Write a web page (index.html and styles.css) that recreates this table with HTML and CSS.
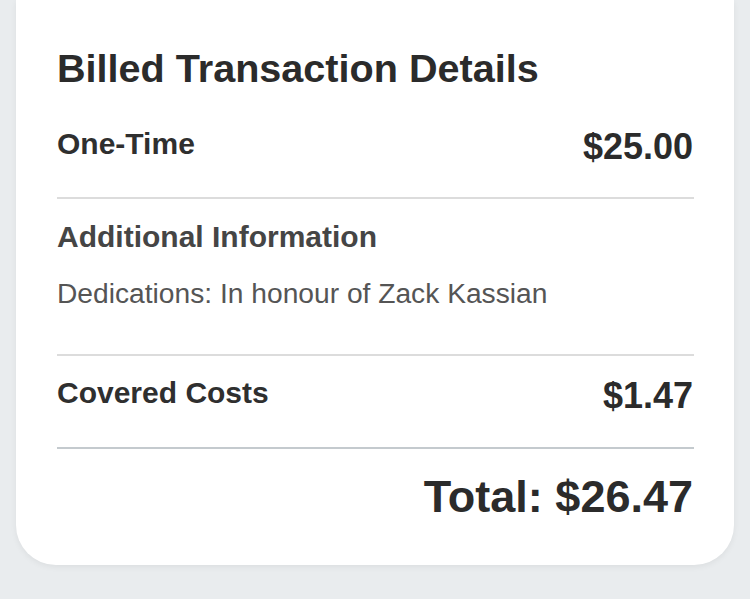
FILE: index.html
```html
<!DOCTYPE html>
<html lang="en">
<head>
<meta charset="utf-8">
<title>Billed Transaction Details</title>
<link rel="stylesheet" href="styles.css">
</head>
<body>
<main class="card">
  <h1 class="title">Billed Transaction Details</h1>
  <section class="row first">
    <span class="label">One-Time</span>
    <span class="amount">$25.00</span>
  </section>
  <section class="info">
    <h2 class="label muted">Additional Information</h2>
    <p class="note">Dedications: In honour of Zack Kassian</p>
  </section>
  <section class="row costs">
    <span class="label">Covered Costs</span>
    <span class="amount">$1.47</span>
  </section>
  <div class="total">Total: $26.47</div>
</main>
</body>
</html>
```

FILE: styles.css
```css
html, body {
  margin: 0;
  padding: 0;
}
body {
  background: #e9ecee;
  font-family: "Liberation Sans", Arial, Helvetica, sans-serif;
  color: #2b2b2b;
  height: 599px;
  overflow: hidden;
}
.card {
  margin: 0 16px;
  background: #ffffff;
  border-radius: 0 0 40px 40px;
  box-shadow: 0 2px 6px rgba(0, 0, 0, 0.06);
  padding: 48px 40px 46px 41px;
}
.title {
  margin: 0;
  font-size: 39.6px;
  line-height: 40px;
  font-weight: 700;
  color: #2b2b2b;
}
.label {
  margin: 0;
  font-size: 30px;
  line-height: 30px;
  font-weight: 700;
  color: #2f2f2f;
}
.muted {
  color: #454545;
}
.amount {
  font-size: 36px;
  line-height: 36px;
  font-weight: 700;
  color: #2b2b2b;
  margin-right: 1px;
}
.row {
  display: flex;
  justify-content: space-between;
  align-items: flex-start;
}
.first {
  margin-top: 41px;
  padding-bottom: 32px;
  border-bottom: 2px solid #dcdcdc;
}
.info {
  padding-top: 23px;
  padding-bottom: 47px;
  border-bottom: 2px solid #dcdcdc;
}
.note {
  margin: 27px 0 0;
  font-size: 28.2px;
  line-height: 28px;
  color: #555555;
}
.costs {
  padding-top: 22px;
  padding-bottom: 33px;
  border-bottom: 2px solid #c4cace;
}
.total {
  margin-top: 25px;
  text-align: right;
  font-size: 45px;
  line-height: 45px;
  font-weight: 700;
  color: #2b2b2b;
  margin-right: 1px;
}
```
